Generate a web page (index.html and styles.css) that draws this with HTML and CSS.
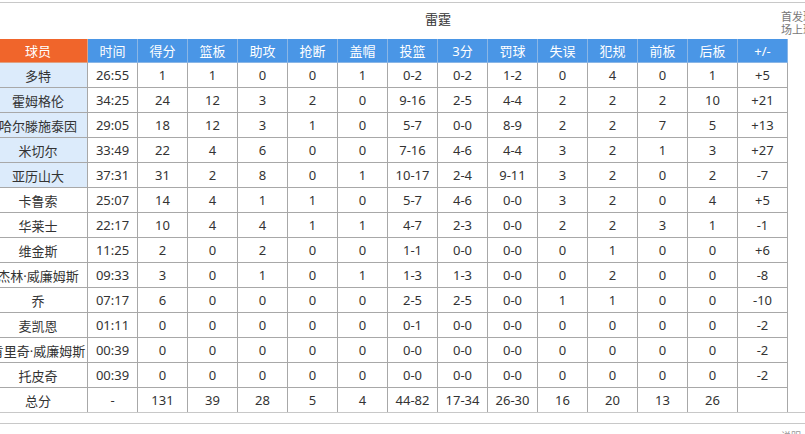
FILE: index.html
```html
<!DOCTYPE html>
<html lang="zh">
<head>
<meta charset="utf-8">
<link rel="stylesheet" href="styles.css">
</head>
<body>
<div class="panel">
  <div class="head">
    <div class="title">雷霆</div>
    <div class="notes"><div>首发球员</div><div>场上球员</div></div>
  </div>
  <table class="stats">
    <thead>
      <tr><th class="name">球员</th><th>时间</th><th>得分</th><th>篮板</th><th>助攻</th><th>抢断</th><th>盖帽</th><th>投篮</th><th>3分</th><th>罚球</th><th>失误</th><th>犯规</th><th>前板</th><th>后板</th><th>+/-</th></tr>
    </thead>
    <tbody>
      <tr><td class="name starter">多特</td><td>26:55</td><td>1</td><td>1</td><td>0</td><td>0</td><td>1</td><td>0-2</td><td>0-2</td><td>1-2</td><td>0</td><td>4</td><td>0</td><td>1</td><td>+5</td></tr>
      <tr><td class="name starter">霍姆格伦</td><td>34:25</td><td>24</td><td>12</td><td>3</td><td>2</td><td>0</td><td>9-16</td><td>2-5</td><td>4-4</td><td>2</td><td>2</td><td>2</td><td>10</td><td>+21</td></tr>
      <tr><td class="name starter">哈尔滕施泰因</td><td>29:05</td><td>18</td><td>12</td><td>3</td><td>1</td><td>0</td><td>5-7</td><td>0-0</td><td>8-9</td><td>2</td><td>2</td><td>7</td><td>5</td><td>+13</td></tr>
      <tr><td class="name starter">米切尔</td><td>33:49</td><td>22</td><td>4</td><td>6</td><td>0</td><td>0</td><td>7-16</td><td>4-6</td><td>4-4</td><td>3</td><td>2</td><td>1</td><td>3</td><td>+27</td></tr>
      <tr><td class="name starter">亚历山大</td><td>37:31</td><td>31</td><td>2</td><td>8</td><td>0</td><td>1</td><td>10-17</td><td>2-4</td><td>9-11</td><td>3</td><td>2</td><td>0</td><td>2</td><td>-7</td></tr>
      <tr><td class="name">卡鲁索</td><td>25:07</td><td>14</td><td>4</td><td>1</td><td>1</td><td>0</td><td>5-7</td><td>4-6</td><td>0-0</td><td>3</td><td>2</td><td>0</td><td>4</td><td>+5</td></tr>
      <tr><td class="name">华莱士</td><td>22:17</td><td>10</td><td>4</td><td>4</td><td>1</td><td>1</td><td>4-7</td><td>2-3</td><td>0-0</td><td>2</td><td>2</td><td>3</td><td>1</td><td>-1</td></tr>
      <tr><td class="name">维金斯</td><td>11:25</td><td>2</td><td>0</td><td>2</td><td>0</td><td>0</td><td>1-1</td><td>0-0</td><td>0-0</td><td>0</td><td>1</td><td>0</td><td>0</td><td>+6</td></tr>
      <tr><td class="name">杰林·威廉姆斯</td><td>09:33</td><td>3</td><td>0</td><td>1</td><td>0</td><td>1</td><td>1-3</td><td>1-3</td><td>0-0</td><td>0</td><td>2</td><td>0</td><td>0</td><td>-8</td></tr>
      <tr><td class="name">乔</td><td>07:17</td><td>6</td><td>0</td><td>0</td><td>0</td><td>0</td><td>2-5</td><td>2-5</td><td>0-0</td><td>1</td><td>1</td><td>0</td><td>0</td><td>-10</td></tr>
      <tr><td class="name">麦凯恩</td><td>01:11</td><td>0</td><td>0</td><td>0</td><td>0</td><td>0</td><td>0-1</td><td>0-0</td><td>0-0</td><td>0</td><td>0</td><td>0</td><td>0</td><td>-2</td></tr>
      <tr><td class="name">肯里奇·威廉姆斯</td><td>00:39</td><td>0</td><td>0</td><td>0</td><td>0</td><td>0</td><td>0-0</td><td>0-0</td><td>0-0</td><td>0</td><td>0</td><td>0</td><td>0</td><td>-2</td></tr>
      <tr><td class="name">托皮奇</td><td>00:39</td><td>0</td><td>0</td><td>0</td><td>0</td><td>0</td><td>0-0</td><td>0-0</td><td>0-0</td><td>0</td><td>0</td><td>0</td><td>0</td><td>-2</td></tr>
      <tr><td class="name">总分</td><td>-</td><td>131</td><td>39</td><td>28</td><td>5</td><td>4</td><td>44-82</td><td>17-34</td><td>26-30</td><td>16</td><td>20</td><td>13</td><td>26</td><td></td></tr>
    </tbody>
  </table>
</div>
<div class="foot"><span class="foot-note">说明</span></div>
</body>
</html>
```

FILE: styles.css
```css
html, body {
  margin: 0;
  padding: 0;
  background: #fff;
  overflow: hidden;
}
body {
  font-family: "Noto Sans", "Noto Sans CJK SC", sans-serif;
  color: #333;
  font-size: 13px;
}
.panel {
  margin-top: 2px;
  border-top: 1px solid #c8c8c8;
  border-bottom: 1px solid #c8c8c8;
  overflow: hidden;
}
.head {
  display: flex;
  height: 36px;
}
.title {
  flex: 0 0 auto;
  width: 356px;
  padding-left: 425px;
  padding-top: 8px;
  font-size: 13px;
  line-height: 16px;
  color: #333;
  white-space: nowrap;
}
.notes {
  flex: 0 0 auto;
  padding-top: 7px;
  font-size: 11px;
  line-height: 13px;
  color: #777;
  white-space: nowrap;
}
.stats {
  margin-left: -12px;
  margin-bottom: -1px;
  border-collapse: collapse;
  table-layout: fixed;
  width: 799px;
}
.stats th, .stats td {
  width: 49px;
  padding: 0;
  text-align: center;
  white-space: nowrap;
  font-weight: normal;
}
.stats th.name, .stats td.name {
  width: 98px;
}
.stats th {
  height: 23px;
  background: #4a96e6;
  color: #fff;
  font-size: 13px;
  border: 1px solid #8ab6e6;
  border-top: 0;
}
.stats th.name {
  background: #f0652b;
  border-color: #e0a080;
}
.stats td {
  height: 24px;
  border: 1px solid #a8a8a8;
  font-size: 13px;
  color: #333;
}
.stats td.starter {
  background: #dcebfb;
}
.foot {
  margin-top: 10px;
  border-top: 1px solid #c8c8c8;
  height: 20px;
  position: relative;
}
.foot-note {
  position: absolute;
  left: 781px;
  top: 4px;
  font-size: 10px;
  color: #999;
}
```
